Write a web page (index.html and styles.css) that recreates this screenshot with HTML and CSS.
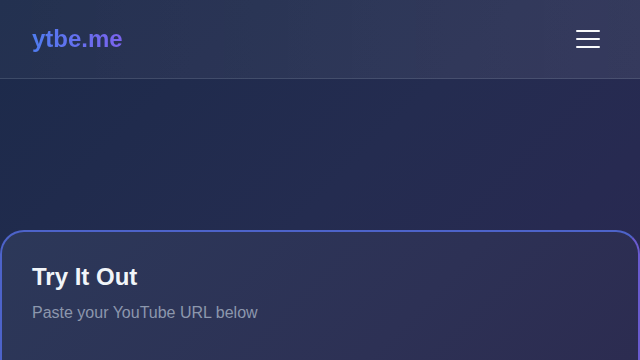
FILE: index.html
```html
<!DOCTYPE html>
<html>
<head>
    <meta name="viewport" content="width=device-width, initial-scale=1.0">
    <title>ytbe.me</title>
    <link rel="stylesheet" href="styles.css">
</head>
<body>
    <header class="site-header">
        <a class="logo" href="#">ytbe.me</a>
        <button class="menu-toggle" aria-label="Menu">
            <span></span>
            <span></span>
            <span></span>
        </button>
    </header>

    <main>
        <section class="hero"></section>

        <section class="try-card">
            <h2>Try It Out</h2>
            <p class="subtitle">Paste your YouTube URL below</p>
        </section>
    </main>
</body>
</html>
```

FILE: styles.css
```css
* {
    box-sizing: border-box;
    margin: 0;
    padding: 0;
}

body {
    min-height: 100vh;
    background: linear-gradient(135deg, #1c2a4a 0%, #242c50 50%, #2a2852 100%);
    font-family: 'Liberation Sans', Arial, sans-serif;
    color: #f1f5f9;
    overflow: hidden;
}

.site-header {
    display: flex;
    justify-content: space-between;
    align-items: center;
    height: 79px;
    padding: 0 32px;
    background: linear-gradient(90deg, rgba(255, 255, 255, 0.03), rgba(255, 255, 255, 0.07));
    border-bottom: 1px solid rgba(148, 163, 184, 0.22);
}

.logo {
    font-size: 24px;
    font-weight: bold;
    text-decoration: none;
    background: linear-gradient(90deg, #4f7cf0, #7b63ee);
    -webkit-background-clip: text;
    background-clip: text;
    color: transparent;
}

.menu-toggle {
    display: flex;
    flex-direction: column;
    gap: 6px;
    padding: 8px;
    background: none;
    border: none;
    cursor: pointer;
}

.menu-toggle span {
    display: block;
    height: 2px;
    width: 24px;
    background: #f8fafc;
    border-radius: 1px;
}

.hero {
    height: 151px;
}

.try-card {
    height: 180px;
    padding: 31px 30px 30px;
    border: 2px solid #5461c4;
    border-color: #4d63c9 #6a5bcf #5a5fc8 #4d63c9;
    border-radius: 24px;
    background: linear-gradient(135deg, #2c3859 0%, #2d3155 60%, #2c2b50 100%);
}

.try-card h2 {
    font-size: 24px;
    font-weight: bold;
    line-height: 28px;
    color: #f1f5f9;
    margin-bottom: 13px;
}

.subtitle {
    font-size: 16px;
    color: #8c97ad;
}
```
